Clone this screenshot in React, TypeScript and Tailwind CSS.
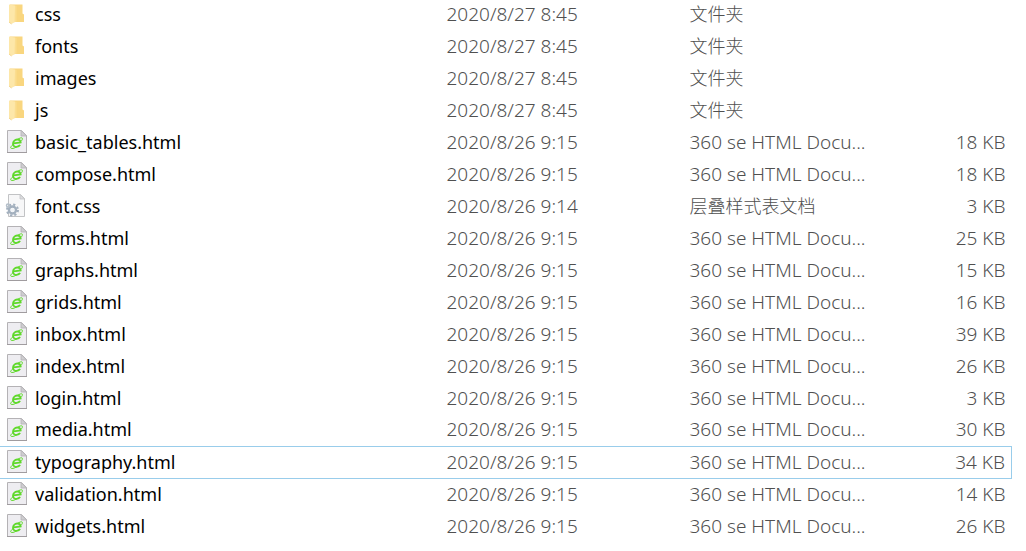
import React from 'react';
import clsx from 'clsx';

type Kind = 'folder' | 'html' | 'css';

interface Entry {
    name: string;
    modified: string;
    kind: Kind;
    size?: string;
}

const entries: Entry[] = [
    { name: 'css', modified: '2020/8/27 8:45', kind: 'folder' },
    { name: 'fonts', modified: '2020/8/27 8:45', kind: 'folder' },
    { name: 'images', modified: '2020/8/27 8:45', kind: 'folder' },
    { name: 'js', modified: '2020/8/27 8:45', kind: 'folder' },
    { name: 'basic_tables.html', modified: '2020/8/26 9:15', kind: 'html', size: '18 KB' },
    { name: 'compose.html', modified: '2020/8/26 9:15', kind: 'html', size: '18 KB' },
    { name: 'font.css', modified: '2020/8/26 9:14', kind: 'css', size: '3 KB' },
    { name: 'forms.html', modified: '2020/8/26 9:15', kind: 'html', size: '25 KB' },
    { name: 'graphs.html', modified: '2020/8/26 9:15', kind: 'html', size: '15 KB' },
    { name: 'grids.html', modified: '2020/8/26 9:15', kind: 'html', size: '16 KB' },
    { name: 'inbox.html', modified: '2020/8/26 9:15', kind: 'html', size: '39 KB' },
    { name: 'index.html', modified: '2020/8/26 9:15', kind: 'html', size: '26 KB' },
    { name: 'login.html', modified: '2020/8/26 9:15', kind: 'html', size: '3 KB' },
    { name: 'media.html', modified: '2020/8/26 9:15', kind: 'html', size: '30 KB' },
    { name: 'typography.html', modified: '2020/8/26 9:15', kind: 'html', size: '34 KB' },
    { name: 'validation.html', modified: '2020/8/26 9:15', kind: 'html', size: '14 KB' },
    { name: 'widgets.html', modified: '2020/8/26 9:15', kind: 'html', size: '26 KB' },
];

const typeLabels: Record<Kind, string> = {
    folder: '文件夹',
    html: '360 se HTML Docu...',
    css: '层叠样式表文档',
};

function FolderIcon() {
    return (
        <svg width="24" height="24" viewBox="0 0 24 24" aria-hidden="true">
            <path d="M6 2.5h12.5v9l1.500 1v7.500H8z" fill="#f9d67f" />
            <path d="M5 2.5l6 1v16.500L7.500 22 5 20z" fill="#fde7a9" />
            <path d="M11 3.500l1.500 .5v15.500l-2 .8z" fill="#fbdd90" />
            <path d="M5 20l2.500 2" stroke="#f3d590" />
        </svg>
    );
}

function HtmlIcon() {
    return (
        <svg width="24" height="24" viewBox="0 0 24 24" aria-hidden="true">
            <path d="M3.5 .5h14l5 5v17h-19z" fill="#eeedf1" stroke="#b4b2b5" />
            <path d="M17 .5l5.5 5.5H17z" fill="#cfced1" stroke="#b4b2b5" strokeWidth=".8" />
            <path d="M3 22.5h20" stroke="#a09c9f" />
            {/* browser "e" with its orbit */}
            <g fill="none" stroke="#5fd92a">
                <path d="M9.500 13.300l7.200-.8c-.1-1.900-1.500-3.200-3.500-3-2.300.2-4.200 2-4.200 4.200 0 2 1.500 3.400 3.600 3.200 1.500-.1 2.900-.9 3.500-2" strokeWidth="1.800" />
                <path d="M9 14.500c-2.300 2-3 3.700-1.500 4 1.600.3 4.800-1 7.200-3M13.500 9.500c2-1.500 4.200-2.200 4.800-1.300.4.700-.1 1.800-1.200 3" strokeWidth="1" />
            </g>
        </svg>
    );
}

function CssIcon() {
    return (
        <svg width="24" height="24" viewBox="0 0 24 24" aria-hidden="true">
            <path d="M4.500 .5h12l4 4v18h-16z" fill="#f7f7f8" stroke="#c2c3c5" />
            <path d="M16 .5l4.500 4.500H16z" fill="#dddddf" stroke="#c2c3c5" strokeWidth=".8" />
            <g fill="none" stroke="#a3b0be">
                <circle cx="8.500" cy="16" r="3.500" strokeWidth="2.500" />
                <circle cx="8.500" cy="16" r="5.500" strokeWidth="2" strokeDasharray="2.200 2.120" />
                <circle cx="4" cy="11.500" r="1.500" strokeWidth="1.500" stroke="#b4bfca" />
            </g>
            <circle cx="8.500" cy="16" r="2" fill="#f1f4f7" />
        </svg>
    );
}

function EntryIcon({ kind }: { kind: Kind }) {
    if (kind === 'folder') return <FolderIcon />;
    if (kind === 'css') return <CssIcon />;
    return <HtmlIcon />;
}

export default function App() {
    const focused = 'typography.html';

    return (
        <main className="bg-white overflow-hidden pr-3.5 pb-2 font-['Noto_Sans','Noto_Sans_CJK_SC',sans-serif]">
            <table className="w-full -mt-0.5 table-fixed border-collapse whitespace-nowrap text-[19px] leading-[31px] font-light text-[#505050]">
                <colgroup>
                    <col />
                    <col className="w-[243px]" />
                    <col className="w-[207px]" />
                    <col className="w-[115px]" />
                </colgroup>
                <tbody>
                    {entries.map((entry) => (
                        <tr
                            key={entry.name}
                            className={clsx('h-8', entry.name === focused && 'border-y border-r border-[#99cdeb]')}
                        >
                            <td className="p-0 pl-1">
                                <div className="flex items-center gap-[7px] text-[18px] font-normal text-black">
                                    <EntryIcon kind={entry.kind} />
                                    <span>{entry.name}</span>
                                </div>
                            </td>
                            <td className="p-0">{entry.modified}</td>
                            <td className={clsx('p-0', entry.kind !== 'html' && 'text-[18px]')}>{typeLabels[entry.kind]}</td>
                            <td className="p-0 pr-1.5 text-right">{entry.size}</td>
                        </tr>
                    ))}
                </tbody>
            </table>
        </main>
    );
}
